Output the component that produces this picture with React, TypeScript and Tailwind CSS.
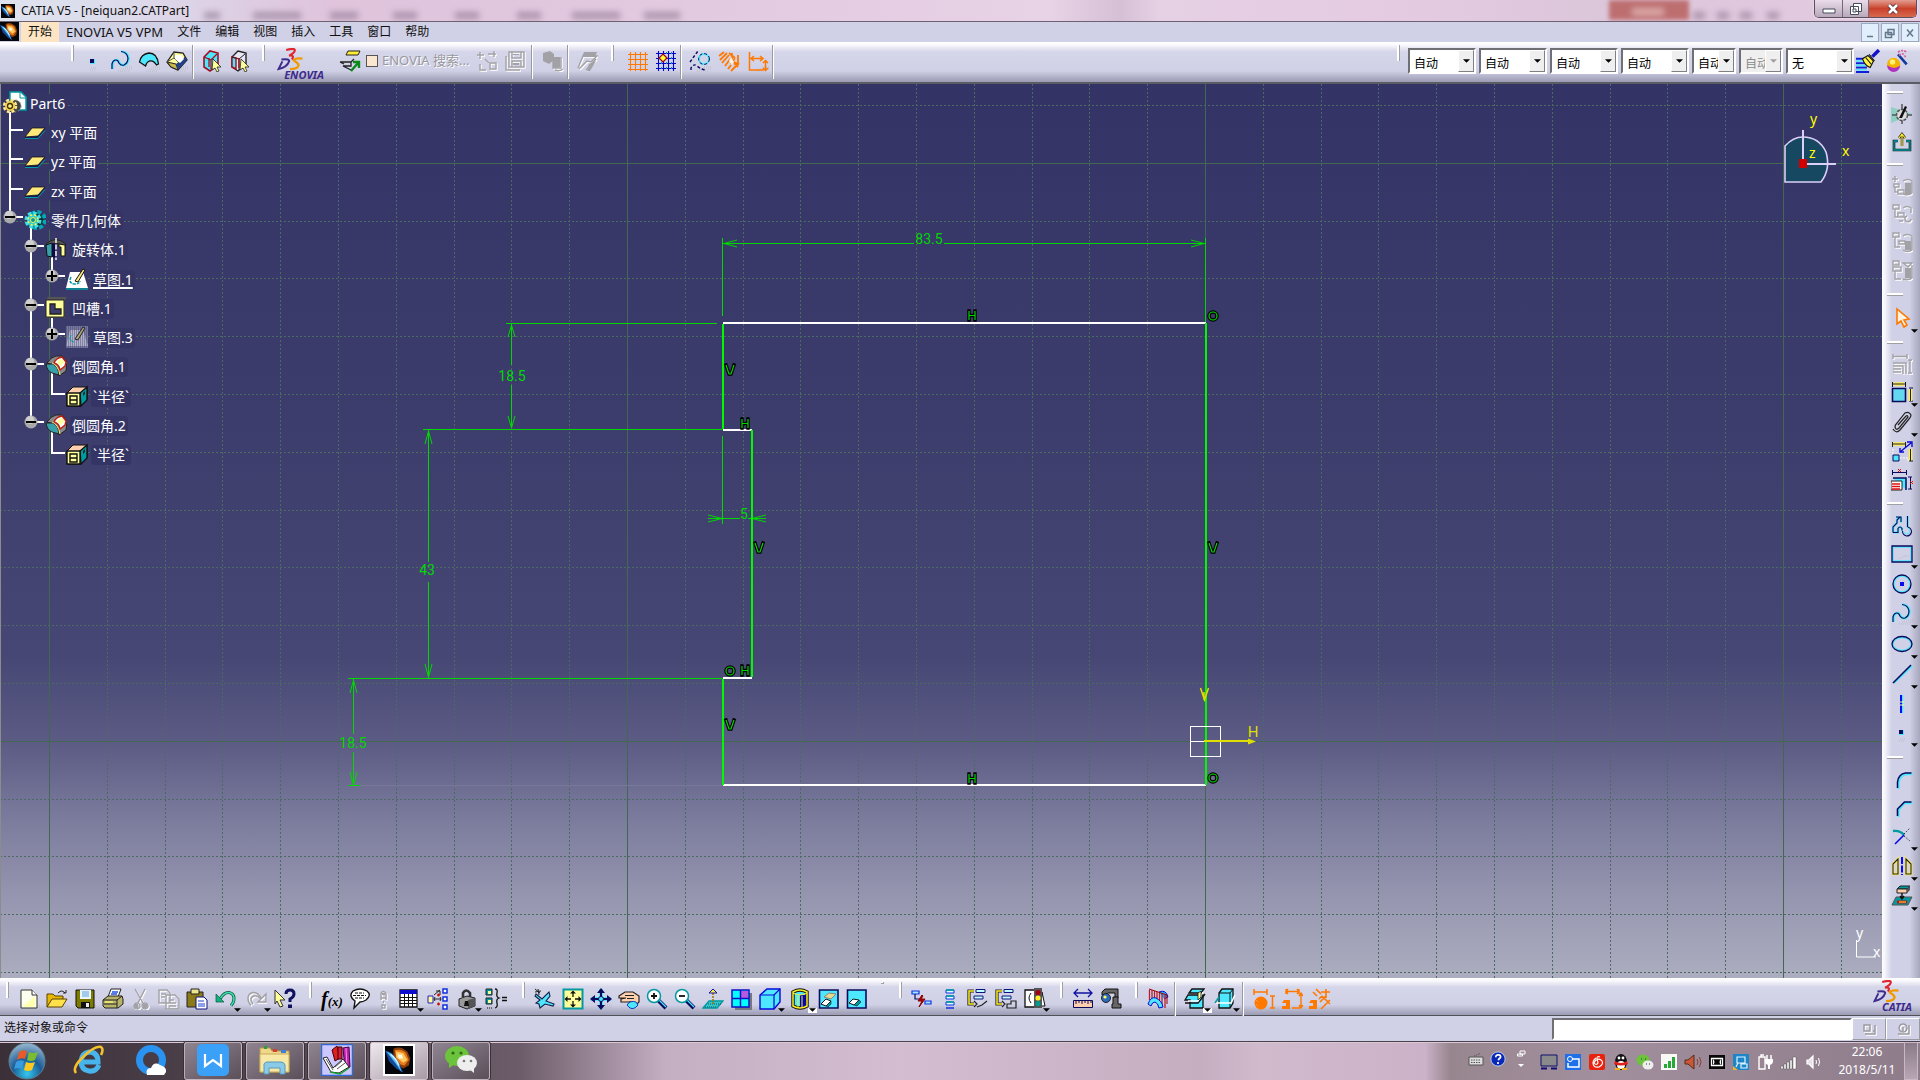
import React from "react";

type Kids = { children?: React.ReactNode };

/* ---------- icon helpers ---------- */
const Ic = ({ children, className = "size-[22px]" }: Kids & { className?: string }) => (
  <svg viewBox="0 0 22 22" className={className} fill="none" aria-hidden="true">
    {children}
  </svg>
);
const N = "#0a0a5c";
const C = "#4de8ff";
const T = "#009aa0";
const Y = "#ffff99";
const O = "#ff7800";
const G = "#a2a2a6";

const Shade = () => <path d="M8 21h12M11 19h11M15 17h7" stroke="#b9b9c6" strokeDasharray="1 1" />;

/* Grey glyph with a white relief edge */
const Dim = ({ d, fill }: { d: string; fill?: string }) => (
  <Ic>
    <path d={d} stroke="#fff" strokeWidth="1.4" transform="translate(1 1)" />
    <path d={d} stroke={G} strokeWidth="1.4" />
    {fill && <path d={fill} fill={G} />}
  </Ic>
);

const icons: Record<string, React.ReactNode> = {
  point: <Ic><path d="M8 9h5v5H8z" fill={C} /><path d="M8 9h4v4H8z" fill={N} /><path d="M9 18h6M8 20h5" stroke="#b9b9c6" strokeDasharray="1 1" /></Ic>,
  curve: <Ic><Shade /><path d="M2.500 19v-5q1-4 4-4q2 0 3 3q2 3 5 2q4-2 4-7q-1-6-7-6.500" stroke={C} strokeWidth="2.600" /><path d="M2 19v-5q1-4 4-4q2 0 3 3q2 3 5 2q4-2 4-7q-1-6-7-6.500" stroke={N} strokeWidth="1.200" /></Ic>,
  surface: <Ic><Shade /><path d="M1.500 12Q3 4 11 3q8 0 9.500 11l-2 1q-3-5-7-4q-3 1-4 5z" fill={C} stroke="#111" strokeWidth="1.300" /></Ic>,
  volume: <Ic><Shade /><path d="M1 12L8 2l9 1 4 7-9 10-7-3z" fill={Y} stroke="#222" strokeWidth="1.300" /><path d="M1 12l9 2 2 6-7-3z" fill="#c8b84a" stroke="#222" /><path d="M10 14l2 6 9-10-2-3z" fill="#23408a" /><path d="M8 2v6l5 5 6-6M8 8l-7 4" stroke="#555" /><path d="M9 5l6 0 3 4-4 4-5-4z" fill="#fff" /></Ic>,
  selSolid: <Ic><path d="M3 7l6-6 8 2v12l-8 6-6-4z" fill={C} stroke="#a01020" strokeWidth="1.600" /><path d="M3 7l7 3v9M10 10l6-6M8 8v9" stroke="#a01020" strokeWidth="1.300" /><path d="M12 9l8 8-4 0 2 4-2 1-2-4-3 2z" fill={Y} stroke="#222" strokeWidth=".8" /></Ic>,
  selEdge: <Ic><path d="M3 7l6-6 8 2v12l-8 6-6-4z" fill="#e8e8f4" stroke="#222" strokeWidth="1.400" /><path d="M3 7l4 1v11l-4-2z" fill={C} stroke="#a01020" strokeWidth="1.400" /><path d="M3 7l7 2v11M10 9l6-5" stroke="#222" /><path d="M7 8l3 1v9" stroke="#a01020" strokeWidth="1.300" /><path d="M12 9l8 8-4 0 2 4-2 1-2-4-3 2z" fill={Y} stroke="#222" strokeWidth=".8" /></Ic>,
  enoviaSearch: <Ic><path d="M9 1h12l-2 4H7z" fill="#ffee33" stroke="#222" /><path d="M1 12h11l3-3M1 12l4 2M12 12v4H4l8 4" stroke="#222" strokeWidth="1.300" /><path d="M12 21l7-8M14 12h6v6" stroke="#0a8a1a" strokeWidth="2.400" /></Ic>,
  dimSync: <Dim d="M4 2v7M1 5h7M12 4h8M18 1v6M4 14v6h6M14 13h6v6h-6zM9 9l4 4" />,
  dimSave: <Dim d="M5 2h15v15H5zM2 6v14h14M8 2v6h9V2M8 17v-6h9v6" fill="M9 13h6v2H9zM9 4h6v1H9z" />,
  dimDb: <Dim d="M11 8h8v10h-8zM13 20q4 2 8-1" fill="M1 3l7-2 4 3v6l-5 4-6-3zM11 7h7v10q-4 2-7 0z" />,
  dimSend: <Dim d="M2 18l5-12h14l-6 6-4-1-8 8M10 20l10-11" fill="M8 2h13l-2 5H6zM13 14l7-3-6 10h-3z" />,
  grid: <Ic><path d="M1 4.500h20M1 9.500h20M1 14.500h20M1 19.500h20M3.500 2v19M8.500 2v19M13.500 2v19M18.500 2v19" stroke={O} strokeWidth="1.100" /></Ic>,
  snapGrid: <Ic><path d="M1 3.500h20M1 8.500h20M1 13.500h20M1 18.500h20M3.500 1v20M8.500 1v20M13.500 1v20M18.500 1v20" stroke="#0000d0" strokeWidth="1.100" /><path d="M6 13h1M6 18h1M11 3h1M11 13h1M11 18h1M16 3h1M16 8h1M16 13h1M16 18h1" stroke={T} strokeWidth="2" /><path d="M8 4l4 4-4 4-4-4z" fill="#ffff33" stroke="#a00010" strokeWidth="1.200" /></Ic>,
  construct: <Ic><Shade /><circle cx="15" cy="9" r="5" stroke={C} strokeWidth="2" /><circle cx="15" cy="9" r="5.400" stroke={N} strokeDasharray="3 2" /><path d="M1 12L9 1M2 20v-2q3-5 6-2q5 4 9 4" stroke={N} strokeDasharray="3 2" strokeWidth="1.400" /></Ic>,
  geoCon: <Ic><path d="M1 6l5-4M2 10l7-7M4 13l7-8M7 16l6-8M10 19l3-4M13 21l8-8M14 3v8l6 3v-9M11 3l6 5M17 8l-4 6M16 13l4 4" stroke={O} strokeWidth="1.800" /><path d="M13 7l3 5-2 3-3-4z" fill="#fff3e6" /></Ic>,
  dimCon: <Ic><Shade /><path d="M2.500 2v18h14M4 8.500h11M7 6l-3 2.500L7 11M13 6l3 2.500-3 2.500M18.500 11v9M16 13l2.500-2.500L21 13M16 18l2.500 2.500L21 18" stroke={O} strokeWidth="1.500" /></Ic>,
  brush: <Ic className="size-6"><path d="M0 9h8M0 13h9M0 17h10M0 21h12" stroke="#1020d8" strokeWidth="1.800" /><path d="M0 11h8M0 15h9M0 19h10" stroke={C} strokeWidth="1.500" /><path d="M6 9l5-3 5 5-3 6q-5-2-7-8z" fill="#ffee44" stroke="#111" /><path d="M9 8l5 6M12 5l5 6" stroke="#111" /><path d="M15 7l6-6" stroke="#1010c8" strokeWidth="3.200" /></Ic>,
  magic: <Ic className="size-6"><circle cx="7" cy="14" r="6" fill="#f6b400" /><path d="M1 15a6 6 0 0 0 12 0q-5 5-12 0z" fill="#b030c0" /><circle cx="6" cy="12" r="2.500" fill="#fff07a" /><path d="M11 5l8 9" stroke="#123a9c" strokeWidth="2.400" /><path d="M11 3q4-3 8 0M12 6q4-4 6 2" stroke="#d860a0" strokeWidth="1.500" strokeDasharray="2 1" /></Ic>,

  newDoc: <Ic><Shade /><path d="M3 2h11l5 5v13H3z" fill="#fffff0" stroke="#333" /><path d="M5 18L17 8v11H6z" fill="#ffffb0" /><path d="M14 2v5h5" stroke="#333" fill="#fff" /></Ic>,
  open: <Ic><Shade /><path d="M1 19V6h6l2 2h8v3" fill="#e8b800" stroke="#5a4200" /><path d="M1 19l5-8h15l-5 8z" fill="#ffe24a" stroke="#5a4200" /><path d="M12 5q4-4 7 0M17 5h3V2" stroke="#222" /></Ic>,
  save: <Ic><Shade /><path d="M2 2h18v18H4l-2-2z" fill="#7d7a00" stroke="#111" /><path d="M6 2h11v9H6z" fill="#e8f4ff" /><path d="M8 4h7M8 6h7M8 8h7" stroke="#5aa0d8" /><path d="M7 14h9v6H7z" fill="#111" /><path d="M12 15h3v4h-3z" fill="#eee" /></Ic>,
  print: <Ic><path d="M6 9l3-8h10l-3 8z" fill="#fff" stroke="#222" /><path d="M10 4h6M9 6h6" stroke="#2050e0" strokeWidth="1.300" /><path d="M1 12l5-4h14l1 3v5l-5 4H3l-2-2z" fill="#b8b26a" stroke="#222" /><path d="M1 12h14l5-4M15 12v8M2 16h13" stroke="#222" /><path d="M3 14h8" stroke="#f5f07a" strokeWidth="1.500" /></Ic>,
  cut: <Dim d="M5 1l8 14M15 1L8 15M7 15a3 3 0 1 0 .1 0M15 15a3 3 0 1 0 .1 0" fill="M4 16h4v4H4zM13 16h4v4h-4z" />,
  copy: <Dim d="M1 2h8l3 3v10H1zM8 7h9l4 4v10H8zM3 6h5M3 9h4M11 12h5M11 15h7M11 18h7" />,
  paste: <Ic><path d="M1 4h16v15H1z" fill="#8a7a18" stroke="#222" /><path d="M5 1h8v5H5z" fill="#eee68a" stroke="#222" /><path d="M10 9h8l3 3v9H10z" fill="#fff" stroke="#101080" /><path d="M12 13h6M12 16h7M12 18h7" stroke="#2040d0" /></Ic>,
  undo: <Ic><Shade /><path d="M5 11Q9 4 14 4.500q5 1 5 6q0 4-3 7" stroke="#075a3a" strokeWidth="3" /><path d="M5 11Q9 4 14 4.500q5 1 5 6q0 4-3 7" stroke="#3fe0b0" strokeWidth="1.500" /><path d="M1 6v8h8z" fill="#18b080" stroke="#075a3a" strokeWidth=".7" /></Ic>,
  redo: <Dim d="M17 11Q13 4 8 4.500q-5 1-5 6q0 4 3 7M21 6v8h-8zM16 11Q12 7 9 8q-3 1-3 4l2 4" />,
  whats: <Ic><path d="M1 2l10 10-5 0 3 6-3 1-3-6-2 3z" fill={Y} stroke="#333" /><path d="M12 6q0-4 4-4q4 0 4 4q0 3-4 5v3" stroke="#101060" strokeWidth="3" /><path d="M14 16.500h4v3.500h-4z" fill="#101060" /></Ic>,
  bubble: <Ic><path d="M4 3q7-4 14 0q5 4-1 9q-3 2-6 2l-6 6 1-7q-7-5-2-10z" fill="#fff" stroke="#111" strokeWidth="1.400" /><path d="M6 5h9M4 7.500h13M6 10h9" stroke="#111" strokeDasharray="3 1" /></Ic>,
  dimKnow: <Dim d="M8 5v7M13 5v7M8 5q2-3 5 0M8 10h5M9 17h3v3H9zM10.500 13v2" fill="M9 5h3v2H9z" />,
  table: <Ic><Shade /><path d="M2 2h17v17H2z" fill="#fff" stroke="#111" strokeWidth="1.300" /><path d="M2 2h17v4H2z" fill="#0b0bd0" /><path d="M2 9.500h17M2 12.500h17M2 15.500h17M6.500 6v13M10.500 6v13M14.500 6v13" stroke="#111" /></Ic>,
  links: <Ic><path d="M1 8h5v7H1z" fill={Y} stroke="#2020c0" /><path d="M16 1h4v4h-4zM16 9h4v4h-4zM16 17h4v4h-4z" stroke="#1030e0" fill="#fff" strokeWidth="1.500" /><path d="M7 11h7M7 7l6-5M8 9l-1 2 1 2M13 9l1 2-1 2M9 3h4v4" stroke="#222" /><path d="M10 7h3M11.500 5.500v3M10 16h3M11.500 14.500v3" stroke="#d01010" strokeWidth="1.300" /></Ic>,
  lock: <Ic><path d="M7 9V5q3-5 7 0v5" stroke="#333" strokeWidth="2.600" /><path d="M3 11l8-3 8 2v8l-8 3-8-3z" fill="#9a9a9a" stroke="#222" /><path d="M12 12v9l7-3v-8z" fill="#555" /><path d="M9 13h3l1 5H8z" fill="#111" /></Ic>,
  formulas: <Ic><path d="M1 1h6v6H1zM1 10h6v6H1z" fill={T} stroke="#222" /><path d="M3 3h3v3H3zM3 12h3v3H3z" fill={Y} /><path d="M10 1q3 0 2 4t2 5q-3 1-2 5t-2 5M17 9.500h5M17 12.500h5" stroke="#111" strokeWidth="1.300" /><path d="M2 20h6" stroke="#111" strokeDasharray="1 1" /></Ic>,

  fly: <Ic><Shade /><path d="M2 6l6 5 7-7 1 4-4 5 8 3-1 2-8-2-5 4-1-4-3-1 4-3-5-4z" fill={C} stroke="#16204a" strokeWidth="1.100" /><path d="M1 1l5 4M1 4l6-1M4 1l1 6" stroke="#222" /></Ic>,
  fit: <Ic><path d="M1.500 1.500h19v19h-19z" fill={Y} stroke={T} strokeWidth="2" /><path d="M11 4v5M11 13v5M4 11h5M13 11h5" stroke="#111" strokeWidth="1.300" /><path d="M11 2.500l-3 3h6zM11 19.500l-3-3h6zM2.500 11l3-3v6zM19.500 11l-3-3v6z" fill="#111" /></Ic>,
  pan: <Ic><Shade /><path d="M11 1v20M1 11h20" stroke={C} strokeWidth="4" /><path d="M11 2v18M2 11h18" stroke={N} strokeWidth="2" /><path d="M11 0L7 5h8zM11 22l-4-5h8zM0 11l5-4v8zM22 11l-5-4v8z" fill={N} /><circle cx="11" cy="11" r="2.500" fill={C} stroke={N} /></Ic>,
  rotate: <Ic><path d="M1 8l6-4h8l6 4v6l-3 3q-2-4-8-3H3v-3l5-1H1z" fill="#ffcfae" stroke="#222" strokeWidth="1.200" /><path d="M7 7.500h9M9 10.500h7" stroke="#222" /><path d="M9 17q3-5 9-3l2 3q-4 5-8 3z" fill={C} stroke="#1040c0" /></Ic>,
  zoomIn: <Ic><path d="M12 12l8 8" stroke={N} strokeWidth="4" /><path d="M13 12l7 7" stroke={C} strokeWidth="1.300" /><circle cx="8" cy="8" r="6.500" fill="#fff" stroke={T} strokeWidth="1.500" /><path d="M8 5v6M5 8h6" stroke="#111" strokeWidth="1.800" /></Ic>,
  zoomOut: <Ic><path d="M12 12l8 8" stroke={N} strokeWidth="4" /><path d="M13 12l7 7" stroke={C} strokeWidth="1.300" /><circle cx="8" cy="8" r="6.500" fill="#fff" stroke={T} strokeWidth="1.500" /><path d="M5 8h6" stroke="#111" strokeWidth="1.800" /></Ic>,
  normal: <Ic><path d="M1 20l6-7h14l-6 7z" fill="#35c4c8" stroke={T} strokeWidth="1.300" /><path d="M3 19h12M6 16h13" stroke="#0a5a70" strokeDasharray="1 1" /><path d="M11 16V5" stroke="#a07a00" strokeWidth="1.500" strokeDasharray="2 1" /><path d="M11 1L7 5h8z" fill="#ffee33" stroke="#1010c0" /></Ic>,
  multi: <Ic><path d="M5 5h17v17H5z" fill="#77777f" /><path d="M2 2h17v17H2z" fill="#00ffff" stroke="#1010c8" strokeWidth="1.500" /><path d="M11 3h7v7h-7z" fill="#b85ae0" /><path d="M10.500 2v17M2 10.500h17" stroke="#1010c8" strokeWidth="1.500" /></Ic>,
  cube: <Ic><path d="M1 7l7-6h13v13l-6 7H1z" fill={C} stroke="#0808d8" strokeWidth="1.400" /><path d="M1 7h14v14M15 7l6-6" stroke="#0808d8" strokeWidth="1.200" /></Ic>,
  shaded: <Ic><path d="M4 4q7-4 14 0v14q-7 4-14 0z" fill={C} stroke="#111" strokeWidth="3.400" /><path d="M11 7h6v11l-6 2z" fill="#0808a8" /><path d="M4 4q7-4 14 0v14q-7 4-14 0z" stroke="#ffee22" strokeWidth="1.500" /><path d="M4 5q7 4 14 0M9 8v12M13 8v12" stroke="#ffee22" /></Ic>,
  hide: <Ic><path d="M1.500 2h18.500v18H1.500z" fill={C} stroke={N} strokeWidth="1.600" /><path d="M6 9l5-4 7 1-5 5z" fill="#e8d890" stroke="#887" /><path d="M3 16l5-5 5 2-5 5z" fill="#fff" stroke="#111" /><path d="M8 18l5-5v3l-3 3z" fill={T} stroke="#111" strokeWidth=".6" /></Ic>,
  swap: <Ic><path d="M1.500 2h18.500v18H1.500z" fill={C} stroke={N} strokeWidth="1.600" /><path d="M3 15l4-4 6 1-5 5z" fill="#fff" stroke="#111" /><path d="M8 17l5-5 2 2-4 4z" fill={T} stroke="#111" strokeWidth=".6" /></Ic>,
  tree1: <Ic><path d="M1 3h7v3H1zM14 13h6v3h-6z" stroke="#1030e0" strokeWidth="1.200" fill="#9fe8ff" /><path d="M4 6v5h4" stroke={N} strokeWidth="1.200" /><path d="M11 7l-4 6h4l-3 6 6-8h-4l2-3z" fill="#b00010" stroke="#800" /></Ic>,
  tree2: <Ic><path d="M7 2h8v3H7zM7 8h8v3H7zM7 14h8v3H7z" fill="#dff" stroke="#1030e0" /><path d="M7 2h8M7 8h8M7 14h8" stroke={T} strokeWidth="1.500" /><path d="M7 20h8" stroke="#1030e0" strokeWidth="1.500" /></Ic>,
  tree3: <Ic><path d="M7 3H2v13h5" stroke="#222" strokeWidth="3.200" /><path d="M7 3H2v13h5" stroke="#ffee22" strokeWidth="1.500" /><path d="M9 1.500h9v3H9zM7 8h9v3H7z" stroke="#101080" fill="#bff" /><path d="M7 19l3-3-3-3M10 19l5-2 5-4" stroke="#222" strokeWidth="1.200" /></Ic>,
  tree4: <Ic><path d="M7 3H2v13h5" stroke="#222" strokeWidth="3.200" /><path d="M7 3H2v13h5" stroke="#ffee22" strokeWidth="1.500" /><path d="M9 1.500h9v3H9zM7 8h9v3H7z" stroke="#101080" fill="#bff" /><path d="M7 19l3-3-3-3M12 20v-4h4v-3h5v7z" stroke="#222" strokeWidth="1.200" /></Ic>,
  traffic: <Ic><path d="M1 2h10v17H1z" fill="#fff" stroke="#111" strokeWidth="1.300" /><path d="M7 5q-4 5 0 10" stroke="#111" /><path d="M18 4l3 14h-4z" fill="#fff" stroke="#111" /><path d="M10 0h8v20h-8z" fill="#555" /><circle cx="14" cy="4.500" r="2.600" fill="#a00010" /><circle cx="14" cy="10" r="2.600" fill="#ffee22" /><circle cx="14" cy="15.500" r="2.600" fill="#009a90" /></Ic>,
  measure: <Ic><path d="M2 5h18M6 1L2 5l4 4M16 1l4 4-4 4" stroke="#1010a0" strokeWidth="1.300" /><path d="M1.500 12.500h19v7h-19z" fill="#ffcfae" stroke={N} /><path d="M4 13v3M7 13v2M10 13v3M13 13v2M16 13v3M19 13v2" stroke={N} /></Ic>,
  caliper: <Ic><path d="M5 1h13v9h-3V5H8L5 7H2V4z" fill="#666" stroke="#111" /><path d="M13 9h5v7h3v4h-9v-4h1z" fill="#666" stroke="#111" /><circle cx="6" cy="10" r="4.500" fill="#2d6ab8" stroke="#222" /><circle cx="5" cy="9" r="1.600" fill="#ff6" /></Ic>,
  analysis: <Ic><path d="M12 4q7-3 9 5l-4 2" fill="#2aa8ff" stroke="#1010c8" /><path d="M2 1l18 6v9" stroke="#900" /><path d="M2.500 2v10M5 2v9M7.500 3v7M10 4v7M12.500 5v8M15 6v12M18 7v13" stroke="#b02030" strokeWidth="1.300" /><path d="M1 16q3-8 8-6q6 3 7 9l-4 1q-1-5-4-6q-3 0-4 4z" fill={C} stroke="#0b0bd0" /></Ic>,
  cutPart: <Ic><path d="M5 5l3-4h12l-3 4zM4 7h15v13H6V12H1z" fill={C} stroke="#111" strokeWidth="1.300" /><path d="M1 15h13l7-9" stroke="#111" strokeWidth="1.500" /><path d="M4 13h10l5-9" stroke="#fff" strokeWidth="1.300" /><path d="M14 5l3-2v6l-3 3z" fill={Y} stroke="#111" strokeWidth=".8" /></Ic>,
  cutPlane: <Ic><path d="M5 5l3-4h11v14l-3 5H5z" fill={C} stroke="#111" strokeWidth="1.300" /><path d="M5 5h11v15M16 5l3-4" stroke="#111" /><path d="M1 15h16l4-8" stroke="#fff" strokeWidth="1.500" /><path d="M1 15l4-6" stroke={T} strokeWidth="1.500" /></Ic>,
  oDim1: <Ic><path d="M1 1v6M14 1v6M1 4h13M19.500 8v12M17 8h5M17 20h5" stroke={O} strokeWidth="1.500" /><circle cx="8" cy="15" r="6.500" fill={O} /><path d="M3 12l3 3M3 16l3 3" stroke="#ffb060" strokeDasharray="1 1" /></Ic>,
  oDim2: <Ic><path d="M5 1v5M18 1v5M5 3.500h13M7 1L5 3.500 7 6M16 1l2 2.500L16 6M20 6v14M18 8l2-3 2 3M18 17l2 3 2-3M11 20h8" stroke={O} strokeWidth="1.400" /><path d="M3 12h6v9H1v-3h4v-3H1z" fill={O} /></Ic>,
  oDim3: <Ic><path d="M4 4l4 4M7 1l5 5M17 1v9M12 4h9M13 8l8 8M14 19l7-7M11 14l6-6M12 21l4-4M10 11l3-3" stroke={O} strokeWidth="1.600" /><path d="M2 12h6v9H0v-3h4v-3H0z" fill={O} /></Ic>,

  compass: <Ic><path d="M0 4l22 7-22 9z" fill="#8fd0c4" /><path d="M11 1v20M1 12h20" stroke="#555" strokeWidth="1.500" /><circle cx="11" cy="12" r="5.500" fill="#ddd" stroke="#555" strokeWidth="1.500" strokeDasharray="3 1" /><path d="M8 15l6-12 2 1-5 11z" fill="#111" /></Ic>,
  exit: <Ic><path d="M7 10H3v9h16v-9h-4" stroke="#111" strokeWidth="2.600" /><path d="M7 10H3v9h16v-9h-4" stroke={T} strokeWidth="1.300" /><path d="M11 15V3M8 7l3-4 3 4" stroke="#222" strokeWidth="2.400" /><path d="M11 15V3M8 7l3-4 3 4" stroke="#ffee22" strokeWidth="1.200" /></Ic>,
  d1: <Dim d="M4 1v6M1 4h6M3 9h5v3H3zM7 15h6v4H7zM12 6q5-3 9 0v12q-4 3-8 1M4 12v5h3" fill="M14 8h6v11h-6z" />,
  d2: <Dim d="M2 2h6v4H2zM4 6v8h3M7 10h6v4H7zM12 5q4-3 8 0v5M16 13a3 3 0 1 0 4 3M8 18h4" />,
  d3: <Dim d="M2 2h6v4H2zM4 6v10h5M8 10h6v3H8zM12 5q4-3 9 0v14q-5 3-9 0" fill="M14 10h6v9h-6z" />,
  d4: <Dim d="M2 2h6v4H2zM2 8h8v4H2zM4 12v8h6M12 4h9l-4 4zM21 6v13q-4 3-9 1" fill="M14 9h6v10h-6z" />,
  arrow: <Ic><path d="M6 2v15l4-3 3 6 3-2-3-5 5-1z" fill="#fff3e2" stroke={O} strokeWidth="1.600" /></Ic>,
  dimCons: <Dim d="M2 1v5M16 1v5M2 3.500h14M19 7v13M17 7h4M17 20h4M2 10h13v11M2 13h10v8M2 16h8M2 19h8" />,
  cons: <Ic><path d="M1.500 1v5M14.500 1v5M18 7h4M18 20h4" stroke={N} /><path d="M2 3h12M19.500 8v12" stroke="#ffee55" strokeWidth="3.500" /><path d="M2 3h12M19.500 8v12" stroke="#222" /><path d="M1.500 7.500h13v13h-13z" fill="#63d8f0" stroke={N} strokeWidth="1.600" /></Ic>,
  clip: <Ic><path d="M7 14l8-9q2-1 2 1l-9 11q-3 3-4-1q0-2 2-4L14 2q4-2 6 2q0 2-2 4L9 19q-4 4-7-1" stroke="#222" strokeWidth="1.200" /></Ic>,
  autoCon: <Ic><path d="M2 3h12M19.500 8v12" stroke="#ffee55" strokeWidth="3.500" /><path d="M1.500 1v5M14.500 1v5M2 3h12M19.500 8v12M18 20h4" stroke="#222" /><path d="M2 14h6v6H2z" fill={C} stroke={N} /><path d="M9 11L20 2M16 1h5v5M9 7v4h4" stroke="#0b0bd0" strokeWidth="1.400" /><path d="M9 17h8v4M2 8v5" stroke="#fff" strokeDasharray="2 1" /></Ic>,
  editCon: <Ic><path d="M1.500 1v5M15.500 1v5M2 3.500h13M19.500 8v12M17 8h4M17 20h4" stroke={N} /><path d="M7 0l3 3M10 0L7 3M19 12l3 3M22 12l-3 3" stroke="#e01010" /><path d="M2 9h13v12" fill={C} stroke={N} strokeWidth="1.500" /><path d="M0 12h11v9H0z" fill="#fff" stroke="#222" /><path d="M1 15h8M1 17.500h8M1 20h8" stroke="#e01010" strokeWidth="1.300" /></Ic>,
  profile: <Ic><path d="M2 17.500V12l4-4V5l3-3M5 2.500h5v5M2 17.500h5v-4q2-3 4 0v2M16.500 1v11" stroke={C} strokeWidth="2.200" /><path d="M2 17.500V12l4-4V5l3-3M5 2h5v5M2 17.500h5v-4q2-3 4 0v2M16.500 1v11q4 1 4 5q-1 4-5 4q-4-1-4-5" stroke={N} strokeWidth="1.100" /><path d="M16 12.500q3 1 3 4.500q-1 2-3.500 2q-3 0-3-3" stroke={C} /></Ic>,
  rect: <Ic><path d="M2 4h18v14H2z" stroke={C} strokeWidth="1.500" /><path d="M1 3h20v16H1z" stroke={N} strokeWidth="1.300" /><path d="M8 16l5-3h7" stroke="#b9b9c6" strokeDasharray="1 1" /></Ic>,
  circle: <Ic><circle cx="11" cy="11" r="8" stroke={C} strokeWidth="1.500" /><circle cx="11" cy="11" r="9" stroke={N} strokeWidth="1.300" /><path d="M9 9h4v4H9z" fill="#0b0bf0" /></Ic>,
  ellipse: <Ic><ellipse cx="11" cy="11" rx="9" ry="6.500" stroke={C} strokeWidth="1.500" /><ellipse cx="11" cy="11" rx="10" ry="7.500" stroke={N} strokeWidth="1.300" /></Ic>,
  line: <Ic><path d="M3 20L21 3" stroke={C} strokeWidth="2" /><path d="M2 20L20 2" stroke={N} strokeWidth="1.600" /></Ic>,
  axis: <Ic><path d="M11.500 2v18" stroke={C} strokeWidth="1.500" /><path d="M10 2v18" stroke="#0b0bf0" strokeWidth="2" /><path d="M9 9h4M9 12h4" stroke={Y} /></Ic>,
  corner: <Ic><path d="M7.500 20v-6q1-8 8-9h6" stroke={C} strokeWidth="2.400" /><path d="M6.500 19v-6q1-8 8-9h6" stroke={N} strokeWidth="1.500" /></Ic>,
  chamfer: <Ic><path d="M7.500 20v-7l6-7h8" stroke={C} strokeWidth="2.400" /><path d="M6.500 19v-7l7-7h7" stroke={N} strokeWidth="1.600" /></Ic>,
  trim: <Ic><path d="M2 6q7-1 11 4" stroke={T} strokeWidth="2.400" /><path d="M4 19l9-9" stroke="#0b0be0" strokeWidth="1.600" /><path d="M13 9l6-6M13 11l6 5" stroke="#333" strokeDasharray="1.500 1.500" /></Ic>,
  mirror: <Ic><path d="M7 4L2 9v10h5zM15 4l5 5v10h-5z" stroke="#ffee55" strokeWidth="2.600" /><path d="M7 4L2 9v10h5zM15 4l5 5v10h-5z" stroke="#222" strokeWidth="1.100" /><path d="M11 2v18" stroke="#0b0bf0" strokeWidth="2" strokeDasharray="7 1.500" /></Ic>,
  project: <Ic><path d="M6 4l3-3h10l-3 3z" fill={T} stroke="#222" /><path d="M6 4h10v4H6z" fill="#ffcfae" stroke="#222" /><path d="M16 4l3-3v4l-3 3z" fill="#555" /><path d="M1 20l4-8h16l-4 8z" fill={T} stroke="#555" /><path d="M11 8v5M9 11l2 3 2-3" stroke="#111" strokeWidth="1.400" /><path d="M6 17h10" stroke="#c01010" strokeWidth="3" /><path d="M8 17h7" stroke="#fe4" /></Ic>,
};

/* ---------- toolbar parts ---------- */
const Caret = ({ boxed }: { boxed?: boolean }) => (
  <span className={boxed ? "absolute -right-0.5 bottom-0 bg-white px-px pb-px" : "absolute right-0 bottom-0 pb-px"}>
    <svg viewBox="0 0 8 4" className="block h-1 w-[7px]"><path d="M0 0h8L4 4z" fill="#000" /></svg>
  </span>
);

const Tool = ({ name, label, menu, boxed, children }: { name?: string; label: string; menu?: boolean; boxed?: boolean } & Kids) => (
  <button type="button" aria-label={label} className={menu ? "relative flex h-7 w-[30px] shrink-0 items-center justify-center" : "flex h-7 w-7 shrink-0 items-center justify-center"}>
    {name ? icons[name] : children}
    {menu && <Caret boxed={boxed} />}
  </button>
);

const SideTool = ({ name, label, menu }: { name: string; label: string; menu?: boolean }) => (
  <button type="button" aria-label={label} className={menu ? "relative flex h-[30px] w-full shrink-0 justify-center pt-[3px] pl-0.5" : "flex h-7 w-full shrink-0 justify-center pt-[3px] pl-0.5"}>
    {icons[name]}
    {menu && <span className="absolute right-0.5 bottom-px"><svg viewBox="0 0 8 4" className="block h-1 w-[7px]"><path d="M0 0h8L4 4z" fill="#000" /></svg></span>}
  </button>
);

const Grip = () => <span className="h-4 w-[3px] shrink-0 border-r border-r-[#a0a0a4] bg-white" />;
const Rule = () => <span className="h-full w-0.5 shrink-0 border-r border-l border-l-[#9a9a9e] border-r-white" />;
const SideGrip = ({ className }: { className: string }) => (
  <span className={`${className} flex w-full shrink-0 items-center pl-[5px]`}>
    <span className="h-[3px] w-4 border-b border-[#a0a0a4] bg-white" />
  </span>
);

const DSMark = ({ word, className }: { word: string; className: string }) => (
  <div className={className}>
    <svg viewBox="0 0 28 24" className="h-[23px] w-7" fill="none" aria-hidden="true">
      <path d="M9 2q9-2 9 0q0 3-6 6q6-1 3 4" stroke="#e0242c" strokeWidth="2.200" />
      <path d="M4 12q9-1 8 2q-2 6-11 8l4-8" stroke="#3d2a8c" strokeWidth="2" />
      <path d="M26 11q-8-1-9 2q4 2 5 5q-1 4-9 4" stroke="#f09a00" strokeWidth="2.400" />
    </svg>
    <span className="block text-right text-[11px] leading-[8px] font-bold text-[#3d2a8c] italic">{word}</span>
  </div>
);

const Combo = ({ value, label, width, off }: { value: string; label: string; width: string; off?: boolean }) => (
  <div className={`${width} relative h-[26px] shrink-0 overflow-hidden border-2 border-t-[#707074] border-r-white border-b-white border-l-[#707074] ${off ? "bg-[#efefef]" : "bg-white"}`}>
    <select aria-label={label} disabled={off} className={`h-full w-full appearance-none pb-1 pl-1 text-xs outline-none ${off ? "text-[#8a8a8a]" : "text-black"}`}>
      <option>{value}</option>
    </select>
    <span className="pointer-events-none absolute top-0 right-0 flex h-full w-4 items-center justify-center border border-t-white border-r-[#808084] border-b-[#808084] border-l-white bg-[#efefef]">
      <svg viewBox="0 0 8 4" className="h-1 w-[7px]"><path d="M0 0h8L4 4z" fill={off ? "#a0a0a0" : "#000"} /></svg>
    </span>
  </div>
);

const Comet = ({ className }: { className: string }) => (
  <svg viewBox="0 0 20 20" className={className} aria-hidden="true">
    <path d="M0 0h20v20H0z" fill="#05060c" />
    <path d="M6 2q4-2 7 0l3 2 2 5-1 5-4 2q-5-2-7-8z" fill="#8a3c08" />
    <path d="M7 3q5-1 8 2l2 5-3 4q-4 0-6-5z" fill="#e87c1c" />
    <path d="M8 4l5 1 3 5-3 2-5-4z" fill="#ffc860" />
    <path d="M9 6l3 0 1 3-3 0z" fill="#fff8e0" />
    <path d="M0 3l5 2 5 7 3 7-5-3-5-5z" fill="#114a9a" />
    <path d="M1 4q6 2 9 9l2 6-4-6q-4-5-7-9z" fill="#5cc0f4" />
    <path d="M4 6q4 3 6 8" stroke="#d4f0ff" strokeWidth="1" fill="none" />
  </svg>
);

/* ---------- title and menu ---------- */
const smudges = [
  "left-[204px] w-4", "left-[253px] w-12", "left-[330px] w-7", "left-[393px] w-6", "left-[455px] w-6", "left-[517px] w-6",
  "left-[572px] w-12", "left-[644px] w-9", "left-[1693px] w-3", "left-[1717px] w-3", "left-[1740px] w-3", "left-[1767px] w-3",
];

const TitleBar = () => (
  <header className="relative flex h-[22px] shrink-0 items-center overflow-hidden border-b border-[#6e6272] bg-[linear-gradient(90deg,#dfe3ef_0,#dcdcec_110px,#dfc4dc_330px,#e2cae0_700px,#e8d2e6_1050px,#d6c0d6_1120px,#e6d0e4_1160px,#e4cbe2_1400px,#dcc6da_1600px,#e4cbe2_100%)]">
    {smudges.map((s) => (
      <span key={s} className={`${s} absolute top-3 h-[7px] bg-[#76607a]/50 blur-[3px]`} />
    ))}
    <span className="absolute top-0 left-[1609px] h-5 w-20 bg-[#bd6f70] blur-[2px]" />
    <span className="absolute top-2 left-[1632px] h-2 w-8 bg-[#dba9a9] blur-[3px]" />
    <Comet className="relative ml-px size-[14px] shrink-0" />
    <h1 className="relative ml-[6px] text-xs text-[#111]">CATIA V5 - [neiquan2.CATPart]</h1>
    <div className="relative mr-[3px] ml-auto flex h-[18px] self-start overflow-hidden rounded-b-[5px] border border-t-0 border-[#5b4f5e] shadow-[0_0_2px_#fff]">
      <button type="button" aria-label="最小化" className="flex w-7 items-center justify-center border-r border-[#75687a] bg-linear-to-b from-[#eadcea] to-[#b9a9bb]">
        <svg viewBox="0 0 14 14" className="size-3.5"><path d="M1 7h12v4H1z" fill="#fff" stroke="#444b5c" /></svg>
      </button>
      <button type="button" aria-label="还原" className="flex w-[26px] items-center justify-center border-r border-[#75687a] bg-linear-to-b from-[#eadcea] to-[#b9a9bb]">
        <svg viewBox="0 0 14 14" className="size-3.5" fill="#fff" stroke="#444b5c"><path d="M4.500 1.500h8v8h-8zM1.500 4.500h8v8h-8z" /><path d="M4 7h3v3H4z" /></svg>
      </button>
      <button type="button" aria-label="关闭" className="flex w-[47px] items-center justify-center bg-linear-to-b from-[#e29c90] via-[#c9402b] to-[#d8694c]">
        <svg viewBox="0 0 14 14" className="size-3.5"><path d="M3 3l8 8M11 3l-8 8" stroke="#5a3038" strokeWidth="4.500" /><path d="M3 3l8 8M11 3l-8 8" stroke="#fff" strokeWidth="2.600" /></svg>
      </button>
    </div>
  </header>
);

const MenuBar = () => (
  <nav className="flex h-5 shrink-0 items-stretch bg-[#d0d0e6] text-xs text-[#111]">
    <Comet className="size-[19px] shrink-0" />
    <button type="button" className="ml-0.5 bg-[#fde4c3] px-[7px]">开始</button>
    <button type="button" className="px-[7px] text-[13px] leading-5">ENOVIA V5 VPM</button>
    {["文件", "编辑", "视图", "插入", "工具", "窗口", "帮助"].map((m) => (
      <button key={m} type="button" className="px-[7px]">{m}</button>
    ))}
    <div className="mr-px ml-auto flex gap-0.5 pt-px">
      {[
        ["最小化文档", "M4 10.500h6"],
        ["还原文档", "M5 3.500h6v5H5zM2.500 6.500h6v5h-6z"],
        ["关闭文档", "M4 3.500l6 7M10 3.500l-6 7"],
      ].map(([l, d]) => (
        <button key={l} type="button" aria-label={l} className="flex w-[18px] items-center justify-center border border-[#9aabc0] bg-[#e1eefb]">
          <svg viewBox="0 0 14 14" className="size-3.5" fill="none"><path d={d} stroke="#66788c" strokeWidth="1.500" /></svg>
        </button>
      ))}
    </div>
  </nav>
);

const bar = "bg-[linear-gradient(180deg,#fff_0,#fbfbfe_6%,#d6d6ea_24%,#d0d0e6_72%,#a5a5bd_94%,#9c9cb4_100%)]";

const TopToolbar = () => (
  <div className={`${bar} flex h-[42px] shrink-0 items-start border-b-2 border-[#5c5c64] pt-[3px]`}>
    <div className="flex h-[34px] shrink-0 items-start pl-[71px]">
      <Grip />
      <div className="ml-[5px] flex pt-0.5">
        <Tool name="point" label="点" /><Tool name="curve" label="曲线" /><Tool name="surface" label="曲面" /><Tool name="volume" label="体积" />
      </div>
      <span className="w-px" /><Rule />
      <div className="ml-1 flex pt-0.5"><Tool name="selSolid" label="选择几何体" /><Tool name="selEdge" label="选择边" /></div>
      <span className="w-2" />
      <Grip />
      <DSMark word="ENOVIA" className="ml-3 w-[47px] pt-[3px]" />
      <div className="ml-3 flex items-center gap-0.5 pt-0.5">
        <Tool name="enoviaSearch" label="ENOVIA 连接" />
        <label className="flex items-center gap-1 text-[13px] whitespace-nowrap text-[#98989e] [text-shadow:1px_1px_#fff]">
          <input type="checkbox" className="size-3 appearance-none border border-[#555] bg-[#fbe6cf]" />
          ENOVIA 搜索...
        </label>
      </div>
      <div className="ml-1 flex pt-0.5"><Tool name="dimSync" label="同步" /><Tool name="dimSave" label="保存到 ENOVIA" /></div>
      <span className="w-0.5" /><Rule />
      <div className="ml-1.5 pt-0.5"><Tool name="dimDb" label="数据库" /></div>
      <Rule />
      <div className="ml-1 pt-0.5"><Tool name="dimSend" label="发送" /></div>
      <span className="w-2.5" />
      <Grip />
      <div className="ml-2.5 flex pt-0.5"><Tool name="grid" label="网格" /><Tool name="snapGrid" label="点对齐" /></div>
      <Rule />
      <div className="ml-1 flex gap-px pt-0.5"><Tool name="construct" label="构造元素" /><Tool name="geoCon" label="几何约束" /><Tool name="dimCon" label="尺寸约束" /></div>
      <Rule />
    </div>
    <div className="ml-auto flex items-start pr-2">
      <Grip />
      <div className="ml-2 flex gap-[3px] pt-[3px]">
        <Combo value="自动" label="填充颜色" width="w-17" />
        <Combo value="自动" label="透明度" width="w-17" />
        <Combo value="自动" label="线宽" width="w-17" />
        <Combo value="自动" label="线型" width="w-17" />
        <Combo value="自动" label="点符号" width="w-11" />
        <Combo value="自动" label="渲染样式" width="w-11" off />
        <Combo value="无" label="图层" width="w-17" />
      </div>
      <div className="flex gap-0.5 pt-0.5"><Tool name="brush" label="格式刷" /><Tool name="magic" label="图形属性向导" /></div>
    </div>
  </div>
);

/* ---------- specification tree ---------- */
const treeIcons: Record<string, React.ReactNode> = {
  part: (
    <svg viewBox="0 0 25 24" className="h-6 w-[25px]" aria-hidden="true">
      <path d="M8 1h11l5 5v13H8z" fill="#fff" stroke={T} strokeWidth="1.500" />
      <path d="M18 1v6h6" fill="none" stroke={T} />
      <circle cx="13" cy="15" r="6" fill="#444" stroke="#888" strokeDasharray="2 2" />
      <circle cx="8" cy="15" r="5" fill="#f2d24a" />
      <circle cx="8" cy="15" r="6" fill="none" stroke="#ffe88a" strokeWidth="2.500" strokeDasharray="3 1.700" />
      <circle cx="8" cy="15" r="2.500" fill="#ffee88" stroke="#40300a" strokeWidth="1.300" />
    </svg>
  ),
  plane: <Ic><path d="M1 17L8 8h13l-7 9z" fill="#111a60" /><path d="M1 16L8 7h13l-7 8z" fill="#ffe97a" stroke="#111" strokeWidth=".8" /><path d="M1 17.500h13l7-8" stroke={T} /></Ic>,
  body: <Ic><circle cx="13" cy="11" r="7" fill="#033" /><circle cx="13" cy="11" r="8" stroke="#04a8b0" strokeWidth="4" strokeDasharray="4 2.300" /><circle cx="9" cy="11" r="6" fill="#2fd0d8" /><circle cx="9" cy="11" r="7" stroke="#40e0e8" strokeWidth="3" strokeDasharray="3.500 2" /><circle cx="9" cy="11" r="5" stroke="#ffee44" strokeWidth="1.500" strokeDasharray="2 2" /><circle cx="9" cy="11" r="2.500" fill={T} stroke="#ffee44" /></Ic>,
  shaft: <Ic><path d="M1 6q9-9 20 0l-1 2-9-3-9 3z" fill="#555" stroke="#222" /><path d="M1 7l6-2v14l-5-1z" fill="#38a0a8" stroke="#111" /><path d="M7 5l3 1v14l-3-1z" fill="#0c0c40" /><path d="M14 6l6 1v11h-4V9h-2z" fill={Y} stroke="#111" /><path d="M11 0v22" stroke="#fff" strokeDasharray="5 1.500" strokeWidth="1.400" /></Ic>,
  sketch: <Ic><path d="M4 4h13l5 16H0z" fill="#fff" /><path d="M0 21h22" stroke={T} strokeWidth="1.500" /><path d="M5 9q-3 6 3 7q6 0 6-3" stroke={T} strokeWidth="1.500" strokeDasharray="3 1" /><path d="M9 13L17 1l2 1-7 12z" fill="#ffe97a" stroke="#111" /></Ic>,
  sketchOff: <Ic><path d="M0 0h22v22H0z" fill="#b5b5d0" opacity=".5" /><path d="M4 4h13l5 16H0z" fill="#e8e8f4" opacity=".5" /><path d="M0 1h22M0 3h22M0 5h22M0 7h22M0 9h22M0 11h22M0 13h22M0 15h22M0 17h22M0 19h22M0 21h22" stroke="#404070" strokeDasharray="1 1" opacity=".8" /><path d="M9 13L17 1l2 1-7 12z" fill="#aaa070" stroke="#223" /><path d="M5 9q-3 6 3 7" stroke={T} /></Ic>,
  pocket: <Ic><path d="M1 3l2-3h19l-2 3v18H1z" fill="#555" /><path d="M1 3h18v17H1z" fill={Y} stroke="#222" /><path d="M5 7h5v5h6v5H5z" fill="#3d3d70" stroke="#222" strokeWidth="1.300" /></Ic>,
  fillet: <Ic><path d="M2 8q4-6 9-7l6 0 5 6-1 9-7 5q0-8-5-11z" fill="#8a8a8a" stroke="#222" /><path d="M1 9h7q5 2 6 11l-7-2q-5-2-6-9z" fill="#38a0a8" stroke="#222" /><path d="M9 8q2-5 8-6l4 5-1 4-5 4q-1-6-6-7z" fill="#fff" stroke="#c02010" strokeWidth="1.400" /><path d="M12 8q1-3 5-4l2 3-3 4q-1-2-4-3z" fill={Y} /><path d="M7 8q6 2 8 12" stroke="#ffe97a" /></Ic>,
  param: <Ic><path d="M1 8l6-6h14v13l-6 6H1z" fill="#ffcfae" stroke="#111" /><path d="M14 8l7-6v13l-6 6z" fill={T} stroke="#111" strokeWidth="1.300" /><path d="M1 8h13v13H1z" fill={Y} stroke="#111" strokeWidth="1.400" /><path d="M4 11h7v8H4zM4 15h7" stroke="#111" strokeWidth="1.400" /><path d="M17 8l2-2v3l-2 2z" fill="#222" /></Ic>,
};

const treeRows: { icon: string; text: string; pad: string; active?: boolean }[] = [
  { icon: "part", text: "Part6", pad: "pl-0.5" },
  { icon: "plane", text: "xy 平面", pad: "pl-6" },
  { icon: "plane", text: "yz 平面", pad: "pl-6" },
  { icon: "plane", text: "zx 平面", pad: "pl-6" },
  { icon: "body", text: "零件几何体", pad: "pl-6" },
  { icon: "shaft", text: "旋转体.1", pad: "pl-[45px]" },
  { icon: "sketch", text: "草图.1", pad: "pl-[66px]", active: true },
  { icon: "pocket", text: "凹槽.1", pad: "pl-[45px]" },
  { icon: "sketchOff", text: "草图.3", pad: "pl-[66px]" },
  { icon: "fillet", text: "倒圆角.1", pad: "pl-[45px]" },
  { icon: "param", text: "`半径`", pad: "pl-[66px]" },
  { icon: "fillet", text: "倒圆角.2", pad: "pl-[45px]" },
  { icon: "param", text: "`半径`", pad: "pl-[66px]" },
];

const Ball = ({ x, y, plus }: { x: number; y: number; plus?: boolean }) => (
  <g>
    <circle cx={x} cy={y} r="6.500" fill="#a9a9a9" />
    <circle cx={x - 1} cy={y - 2} r="4" fill="#cfcfcf" />
    <path d={`M${x - 5} ${y}h10${plus ? `M${x} ${y - 5}v10` : ""}`} stroke="#000" strokeWidth="2" />
  </g>
);

const Tree = () => (
  <div className="absolute top-1 left-0 w-40">
    <svg className="absolute top-0 left-0 h-[390px] w-24" fill="none" aria-hidden="true">
      <path d="M10 24v100M10 42h13M10 71h13M10 101h13M10 129h13M31 138v196M31 158h13M31 217h13M31 276h13M31 334h13M52 166v22h13M52 226v20h13M52 284v22h13M52 343v22h13" stroke="#fff" strokeWidth="2" />
      <Ball x={10} y={129} /><Ball x={31} y={158} /><Ball x={52} y={188} plus /><Ball x={31} y={217} />
      <Ball x={52} y={246} plus /><Ball x={31} y={276} /><Ball x={31} y={334} />
    </svg>
    <ul className="relative flex h-[381px] flex-col text-sm text-white">
      {treeRows.map((r, i) => (
        <li key={i} className={`${r.pad} flex flex-1 items-center`}>
          <span className="shrink-0">{treeIcons[r.icon]}</span>
          <span className={`${i === 0 ? "ml-px" : "ml-[3px]"} mt-0.5 rounded bg-[#343465] px-0.5 leading-5 whitespace-nowrap`}>
            <span className={r.active ? "underline decoration-2 underline-offset-2" : ""}>{r.text}</span>
          </span>
        </li>
      ))}
    </ul>
  </div>
);

/* ---------- sketch canvas ---------- */
const CELL = 57.8;
const gridSteps = Array.from({ length: 80 }, (_, k) => k);

const Grid = () => (
  <g strokeWidth="1" shapeRendering="crispEdges">
    {gridSteps.map((k) => {
      const x = Math.round(49 + k * CELL) + 0.5;
      const y = Math.round(21 + k * CELL) + 0.5;
      return (
        <g key={k}>
          <line x1={x} x2={x} y1="0" y2="100%" stroke={k % 10 === 0 ? "#426852" : "#4b6a62"} strokeDasharray={k % 10 === 0 ? undefined : "2 2"} />
          <line y1={y} y2={y} x1="0" x2="100%" stroke={k % 10 === 1 ? "#426852" : "#4b6a62"} strokeDasharray={k % 10 === 1 ? undefined : "2 2"} />
        </g>
      );
    })}
  </g>
);

const marks: [string, number, number][] = [
  ["H", 972, 236], ["O", 1213, 236], ["V", 730, 290], ["H", 745, 344], ["V", 759, 468], ["V", 1213, 468],
  ["O", 730, 591], ["H", 745, 591], ["V", 730, 645], ["H", 972, 699], ["O", 1213, 698],
];
const dims: [string, number, number][] = [
  ["83.5", 929, 160], ["18.5", 512, 297], ["43", 427, 491], ["18.5", 353, 664], ["5", 744, 435],
];
const markPath: Record<string, string> = {
  H: "M-3 -9v9M3 -9v9M-3 -4.500h6",
  V: "M-4 -9l3 9h2l3-9",
};

const Sketch = () => (
  <svg className="absolute inset-0 h-full w-full" fill="none" role="img" aria-label="草图">
    <Grid />
    <path d="M353 701.500h369" stroke="#77779a" />
    <g stroke="#00d800" shapeRendering="crispEdges">
      <path d="M722.500 154v78M1205.500 154v85M723 159.500h191M944 159.500h261" />
      <path d="M506 239.500h211M511.500 240v41M511.500 301v43M423 345.500h299" />
      <path d="M428.500 346v132M428.500 498v96M348 594.500h374" />
      <path d="M353.500 595v55M353.500 668v33M348 701.500h12" />
      <path d="M722.500 352v88M708 434.500h32M748 434.500h18" />
    </g>
    <g stroke="#00d800">
      <path d="M737 156l-13 3.500 13 3.500M1191 156l13 3.500-13 3.500M728 159.500h7M1193 159.500h7" />
      <path d="M508 253l3.500-12 3.500 12M508 332l3.500 12 3.500-12M425 360l3.500-13 3.500 13M425 580l3.500 13 3.500-13M350 609l3.500-13 3.500 13M350 688l3.500 13 3.500-13" />
      <path d="M708 431l14 3.500-14 3.500M766 431l-14 3.500 14 3.500" />
    </g>
    <g strokeWidth="2" shapeRendering="crispEdges">
      <path d="M723 239h483M723 346h29M723 594h29M723 701h483" stroke="#fff" />
      <path d="M723 240v105M752 346v247M723 595v106M1206 239v462" stroke="#00f800" />
    </g>
    <g shapeRendering="crispEdges">
      <path d="M1190.500 642.500h30v30h-30zM1191 657.500h14" stroke="#fff" />
      <path d="M1206 657h45" stroke="#dede00" strokeWidth="2" />
      <path d="M1204 656h2v2h-2z" fill="#dede00" />
    </g>
    <path d="M1256 657.500l-8-3v6z" fill="#dede00" />
    <path d="M1200.500 604l4 12 4-12M1204 608v8" stroke="#dede00" strokeWidth="1.500" />
    <g className="font-['Roboto',sans-serif]" textAnchor="middle">
      <text x="1253" y="653" fontSize="15" fill="#dede00">H</text>
      {dims.map(([t, x, y], i) => <text key={i} x={x} y={y} fontSize="14" fill="#00d800">{t}</text>)}
    </g>
    {marks.map(([m, x, y], i) =>
      m === "O" ? (
        <g key={i}><circle cx={x} cy={y - 4} r="4" stroke="#000" strokeWidth="3.500" /><circle cx={x} cy={y - 4} r="4" stroke="#00d800" strokeWidth="1.200" /></g>
      ) : (
        <g key={i} transform={`translate(${x} ${y})`}>
          <path d={markPath[m]} stroke="#000" strokeWidth="3.400" strokeLinecap="square" />
          <path d={markPath[m]} stroke="#00d800" strokeWidth="1.200" />
        </g>
      ),
    )}
  </svg>
);

const Compass = () => (
  <svg className="absolute top-6 right-3 h-20 w-[90px]" fill="none" fontSize="14" aria-hidden="true">
    <path d="M5 38q8-9 18-9q16 0 23 15q5 17-5 30H5z" fill="#174862" />
    <path d="M5 38q8-9 18-9q16 0 23 15q5 17-5 30H5z" stroke="#dccff8" strokeWidth="1.600" />
    <path d="M23 22v32M23 56h33" stroke="#dccff8" strokeWidth="2" />
    <path d="M19 51h8v9h-8z" fill="#d00000" />
    <g fill="#ffff00"><text x="30" y="16">y</text><text x="62" y="48">x</text><text x="29" y="50">z</text></g>
  </svg>
);

const Viewport = () => (
  <main className="relative min-w-0 flex-1 overflow-hidden bg-[linear-gradient(180deg,#333366_0,#3c3c6c_35%,#474775_64%,#5c5c85_74%,#77779a_81%,#9393ae_90%,#adadc0_100%)]">
    <Sketch />
    <Compass />
    <svg className="absolute right-0 bottom-4 h-12 w-12" fill="none" fontSize="14" aria-hidden="true">
      <path d="M22.500 26v17H42" stroke="#fff" />
      <text x="22" y="24" fill="#fff">y</text><text x="39" y="43" fill="#fff">x</text>
    </svg>
    <Tree />
    <span className="absolute inset-y-0 left-0 w-px bg-[#8c8c90]" />
  </main>
);

const SideToolbar = () => (
  <aside className="flex w-[38px] shrink-0 flex-col bg-[linear-gradient(90deg,#fff_0,#f4f4fb_8%,#d0d0e6_26%,#d0d0e6_72%,#a6a6bd_100%)]">
    <SideGrip className="h-4" />
    <SideTool name="compass" label="工作台" /><SideTool name="exit" label="退出工作台" />
    <SideGrip className="h-4" />
    <SideTool name="d1" label="结构树一" /><SideTool name="d2" label="结构树二" /><SideTool name="d3" label="结构树三" /><SideTool name="d4" label="结构树四" />
    <SideGrip className="h-5" />
    <SideTool name="arrow" label="选择" menu />
    <SideGrip className="h-4" />
    <SideTool name="dimCons" label="对话框约束" /><SideTool name="cons" label="约束" menu /><SideTool name="clip" label="固联" menu />
    <SideTool name="autoCon" label="自动约束" /><SideTool name="editCon" label="编辑多重约束" />
    <SideGrip className="h-[18px]" />
    <SideTool name="profile" label="轮廓" /><SideTool name="rect" label="矩形" menu /><SideTool name="circle" label="圆" menu />
    <SideTool name="curve" label="样条线" menu /><SideTool name="ellipse" label="椭圆" menu /><SideTool name="line" label="直线" menu />
    <SideTool name="axis" label="轴" /><SideTool name="point" label="点" menu />
    <SideGrip className="h-[18px]" />
    <SideTool name="corner" label="圆角" /><SideTool name="chamfer" label="倒角" /><SideTool name="trim" label="修剪" menu />
    <SideTool name="mirror" label="镜像" menu /><SideTool name="project" label="投影三维元素" menu />
  </aside>
);

/* ---------- bottom ---------- */
const BottomToolbar = () => (
  <div className={`${bar} flex h-[38px] shrink-0 items-start border-b border-[#505058] pt-1`}>
    <div className="flex h-[34px] items-start pl-1.5">
      <Grip />
      <div className="ml-1.5 flex pt-[3px]">
        <Tool name="newDoc" label="新建" /><Tool name="open" label="打开" /><Tool name="save" label="保存" /><Tool name="print" label="打印" />
        <Tool name="cut" label="剪切" /><Tool name="copy" label="复制" /><Tool name="paste" label="粘贴" />
        <Tool name="undo" label="撤销" menu /><Tool name="redo" label="重做" menu /><Tool name="whats" label="这是什么" />
      </div>
      <span className="w-2.5" /><Grip />
      <div className="ml-1.5 flex pt-[3px]">
        <Tool label="公式"><span className="font-['Liberation_Serif',serif] text-xl leading-none font-bold text-black italic">f<span className="text-[13px]">(x)</span></span></Tool>
        <Tool name="bubble" label="注解" />
        <div className="-mr-1 -ml-1 flex"><Tool name="dimKnow" label="知识工程" /></div>
        <Tool name="table" label="设计表" menu />
        <Tool name="links" label="关联" /><Tool name="lock" label="锁定" menu /><Tool name="formulas" label="等价尺寸" />
      </div>
      <span className="w-3" /><Grip />
      <div className="ml-1.5 flex pt-[3px]">
        <Tool name="fly" label="飞行模式" /><Tool name="fit" label="全部适应" /><Tool name="pan" label="平移" /><Tool name="rotate" label="旋转" />
        <Tool name="zoomIn" label="放大" /><Tool name="zoomOut" label="缩小" /><Tool name="normal" label="法线视图" /><Tool name="multi" label="多视图" />
        <Tool name="cube" label="等轴测视图" menu /><Tool name="shaded" label="着色" menu boxed /><Tool name="hide" label="隐藏显示" /><Tool name="swap" label="交换可视空间" />
      </div>
      <span className="ml-2.5 h-0.5 w-[3px] border-r border-b border-[#a0a0a4] bg-white" />
      <span className="w-[15px]" /><Grip />
      <div className="ml-1.5 flex pt-[3px]">
        <Tool name="tree1" label="更新" /><Tool name="tree2" label="列表" /><Tool name="tree3" label="工作对象草图" /><Tool name="tree4" label="工作对象实体" /><Tool name="traffic" label="扫描" menu />
      </div>
      <span className="w-2.5" /><Grip />
      <div className="ml-1.5 flex pt-[3px]"><Tool name="measure" label="测量间距" /><Tool name="caliper" label="测量项" /></div>
      <span className="w-2.5" /><Grip />
      <div className="ml-1.5 flex pt-[3px]"><Tool name="analysis" label="拔模分析" /></div>
      <span className="w-0.5" /><Rule />
      <div className="ml-1 flex pt-[3px]"><Tool name="cutPart" label="按草图平面剪切零件" menu boxed /><Tool name="cutPlane" label="剖切" menu /></div>
      <span className="w-0.5" /><Rule />
      <div className="ml-1.5 flex pt-[3px]"><Tool name="oDim1" label="诊断" /><Tool name="oDim2" label="尺寸诊断" /><Tool name="oDim3" label="几何诊断" /></div>
    </div>
    <DSMark word="CATIA" className="-mt-0.5 mr-2 ml-auto w-[39px]" />
  </div>
);

const StatusBar = () => (
  <div className="flex h-[25px] shrink-0 items-center bg-[#d0d0e6] text-xs text-[#111]">
    <p className="pb-0.5 pl-1">选择对象或命令</p>
    <input aria-label="命令行" className="ml-auto h-[22px] w-[300px] border-2 border-t-[#707074] border-r-white border-b-white border-l-[#707074] bg-white px-1 outline-none" />
    {[
      ["对话框", "M3 3h6v6H3zM12 9h2v1M14 3v9H4"],
      ["信息", "M8 2a4 4 0 1 0 .1 0M8 5v4M14 3v9H3"],
    ].map(([l, d]) => (
      <button key={l} type="button" aria-label={l} className="flex h-[22px] w-[34px] items-center justify-center border border-t-white border-r-[#9a9aa0] border-b-[#9a9aa0] border-l-white">
        <svg viewBox="0 0 16 14" className="h-3.5 w-4" fill="none"><path d={d} stroke="#fff" strokeWidth="1.500" transform="translate(1 1)" /><path d={d} stroke="#9a9aa0" strokeWidth="1.500" /></svg>
      </button>
    ))}
  </div>
);

const taskApps: [string, boolean, React.ReactNode][] = [
  ["WPS", false, <svg viewBox="0 0 32 32" className="size-8"><rect width="32" height="32" rx="5" fill="#3ba0f8" /><path d="M8 10v12l8-6 8 6V10" stroke="#fff" strokeWidth="2.200" fill="none" /></svg>],
  ["文件资源管理器", false, <svg viewBox="0 0 32 32" className="size-8"><path d="M1 4h10l2 3h17v21H1z" fill="#f0d688" stroke="#b89a48" /><path d="M5 2h3v3H5z" fill="#2aa040" /><path d="M14 5h4v3h-4z" fill="#d04030" /><path d="M22 6h5v3h-5z" fill="#3a80d8" /><path d="M1 10h29v18H1z" fill="#f8e8a8" stroke="#c8aa58" /><path d="M5 30V20q1-2 3-2h14q3 0 4 3v9h-5v-6H10v6z" fill="#8ccbe8" stroke="#5598bc" /></svg>],
  ["词典", false, <svg viewBox="0 0 32 32" className="size-8"><path d="M.5.500h31v31H.5z" fill="#ccc8ff" stroke="#2f6ad8" strokeWidth="1.500" /><path d="M11 6l5-4 3 12-5 3z" fill="#e02020" stroke="#400" /><path d="M17 3h4v12h-4z" fill="#d02040" stroke="#400" /><path d="M22 4l6-1 1 20-5 2z" fill="#c020b0" stroke="#404" /><path d="M25 4l1 20" stroke="#f090e0" /><path d="M2 14l4-1 6 11 10-9 6 8-10 6-8-1z" fill="#fff" stroke="#222" /><path d="M14 23l7-6M16 25l8-6M5 15l7 11" stroke="#555" /><path d="M9 28l10 2 9-6" stroke="#18a030" strokeWidth="1.500" fill="none" /></svg>],
  ["CATIA V5", true, <span className="border-2 border-white"><Comet className="size-7" /></span>],
  ["微信", false, <svg viewBox="0 0 32 28" className="h-7 w-8"><ellipse cx="12" cy="10" rx="12" ry="10" fill="#6cc33c" /><path d="M4 16l0 6 6-4z" fill="#6cc33c" /><circle cx="8" cy="7" r="1.600" fill="#2f6a18" /><circle cx="16" cy="7" r="1.600" fill="#2f6a18" /><ellipse cx="22" cy="17" rx="10" ry="8" fill="#eee" /><path d="M24 23l5 4v-6z" fill="#eee" /><circle cx="19" cy="15" r="1.300" fill="#777" /><circle cx="26" cy="15" r="1.300" fill="#777" /></svg>],
];

const tray: [string, React.ReactNode][] = [
  ["显示器", <><path d="M1 2h16v11H1z" fill="#8a8a8a" stroke="#101070" /><path d="M1 15.500h6M11 15.500h6" stroke="#101070" strokeWidth="2" /></>],
  ["截图", <><path d="M1 1h16v16H1z" fill="#1f6fe8" /><path d="M8 6h7v8H4v-4" fill="none" stroke="#fff" strokeWidth="1.500" /><circle cx="6" cy="6" r="2.500" fill="none" stroke="#fff" /></>],
  ["网易云音乐", <><rect x="1" y="1" width="16" height="16" rx="2" fill="#e8220e" /><path d="M12 4q-3-1-3 1l1 5q-1 2-3 1t1-4q4-2 6 1t-3 6q-6 1-6-4q0-3 3-5" fill="none" stroke="#fff" strokeWidth="1.200" /></>],
  ["QQ", <><ellipse cx="9" cy="9" rx="6" ry="8" fill="#111" /><ellipse cx="9" cy="12" rx="4" ry="4" fill="#fff" /><path d="M3 8q6 4 12 0l1 3q-7 3-14 0z" fill="#e0201c" /><circle cx="7" cy="5" r="1.400" fill="#fff" /><circle cx="11" cy="5" r="1.400" fill="#fff" /><path d="M3 15h5v2H3zM10 15h5v2h-5z" fill="#f8b018" /></>],
  ["微信", <><ellipse cx="7" cy="7" rx="6.500" ry="5.500" fill="#6cc33c" /><ellipse cx="12" cy="12" rx="5.500" ry="4.500" fill="#eee" /><path d="M5 6h1M9 6h1M10 11h1M13 11h1" stroke="#333" /></>],
  ["信号", <><path d="M1 1h16v16H1z" fill="#f8f8f4" /><path d="M4 11h3v4H4zM8 8h3v7H8zM12 4h3v11h-3z" fill="#28a838" /></>],
  ["音频管理", <><path d="M1 7h3l6-5v14l-6-5H1z" fill="#c85838" stroke="#5a2818" /><path d="M13 6q2 3 0 6M15.500 4q3 5 0 10" stroke="#8a4030" fill="none" /></>],
  ["杜比", <><path d="M1 2h16v14H1z" fill="#080808" /><path d="M3.500 5.500h11v7h-11z" fill="none" stroke="#fff" strokeWidth="1.300" /><path d="M5 6q3 3 0 6zM13 6q-3 3 0 6z" fill="#fff" /></>],
  ["图形", <><path d="M1 1h16v16H1z" fill="#1c86c8" /><path d="M5 4h8v6H5zM4 14l2-4M9 11h6v4H9z" fill="none" stroke="#dff4ff" strokeWidth="1.200" /><path d="M1 13l5 4H1z" fill="#f0b030" /></>],
  ["电源", <><path d="M3 4h6v12H3zM5 4V2h3" fill="none" stroke="#fff" strokeWidth="1.400" /><path d="M11 2v4M15 2v4" stroke="#fff" strokeWidth="1.500" /><path d="M9 6h8v3q-1 3-3 3v4h-2v-4q-3-1-3-3z" fill="#fff" /></>],
  ["网络", <path d="M1 13h2v3H1zM4 11h2v5H4zM7 9h2v7H7zM10 7h2v9h-2zM13 4h3v12h-3z" fill="#fff" stroke="#444" strokeWidth=".4" />],
  ["音量", <><path d="M3 7h2l4-4v12l-4-4H3z" fill="#e8e0e8" stroke="#fff" strokeWidth="1.200" /><path d="M12 7q1 2 0 4M14.500 5q2 4 0 8" stroke="#fff" fill="none" /></>],
];

const Taskbar = () => (
  <footer className="flex h-[39px] shrink-0 items-start border-t border-[#4c424c] bg-[linear-gradient(90deg,#3b3038_0,#4a3e48_180px,#6c5c69_520px,#c4aec2_665px,#d4bdd0_900px,#c4aec0_1200px,#d2bacd_1260px,#cbb2c8_1425px,#98868f_1450px,#a28f9e_1600px,#8e7c8b_100%)] shadow-[inset_0_1px_#d8c8d8]">
    <button type="button" aria-label="开始" className="ml-[7px] flex w-10 justify-center">
      <svg viewBox="0 0 40 38" className="h-[38px] w-10">
        <defs>
          <radialGradient id="orb" cx=".5" cy=".85" r=".9"><stop offset="0" stopColor="#35c8ee" /><stop offset=".45" stopColor="#1a5c96" /><stop offset="1" stopColor="#a9c4d6" /></radialGradient>
        </defs>
        <circle cx="20" cy="19" r="18" fill="url(#orb)" stroke="#5e7c90" />
        <path d="M12 10q4-3 8-1l-2 8q-4-2-8 1z" fill="#e85a28" /><path d="M22 10q4 2 9 0l-3 8q-4 2-8 0z" fill="#7cbc30" />
        <path d="M9 20q4-3 8-1l-2 8q-4-2-8 0z" fill="#3a9ce0" /><path d="M19 20q4 2 9 0l-3 8q-4 2-8 0z" fill="#fcc820" />
      </svg>
    </button>
    <button type="button" aria-label="Internet Explorer" className="ml-[26px] flex h-9 w-8 items-center justify-center">
      <svg viewBox="0 0 32 32" className="size-8" fill="none"><path d="M26 21q-3 7-10 6q-8-1-8-10q1-8 8-9q9 0 9 10H9" stroke="#48b4ec" strokeWidth="5" /><path d="M3 29q-4-5 6-15Q22 1 28 3q3 2 0 8" stroke="#f4c02c" strokeWidth="2.600" /></svg>
    </button>
    <button type="button" aria-label="QQ浏览器" className="ml-[30px] flex h-9 w-8 items-center justify-center">
      <svg viewBox="0 0 32 32" className="size-8"><circle cx="16" cy="16" r="11.500" stroke="#2a92f0" strokeWidth="7" fill="none" /><path d="M12 31q-2-7 4-7q3-7 9-3q7 2 6 7l-2 3z" fill="#fff" /></svg>
    </button>
    <div className="ml-[17px] flex gap-1">
      {taskApps.map(([l, on, icon]) => (
        <button key={l} type="button" aria-label={l} className={`flex h-[38px] w-[58px] items-center justify-center rounded-[3px] border border-[#cfc3cd]/80 pb-0.5 shadow-[0_0_0_1px_#3a3038] ${on ? "bg-linear-to-br from-[#efe9ee] to-[#a79aa6]" : "bg-linear-to-br from-[#8f8590] to-[#5b4f5a]"}`}>
          {icon}
        </button>
      ))}
    </div>
    <div className="ml-auto flex h-[38px] items-center">
      <div className="flex items-center pb-1">
        <svg viewBox="0 0 16 14" className="h-3.5 w-4" role="img" aria-label="键盘"><path d="M1 5h14v8H1z" fill="#ddd" stroke="#555" /><path d="M3 8h10M3 10.500h10M6 4q3-1 7-3" stroke="#555" strokeDasharray="1.500 1" fill="none" /></svg>
        <svg viewBox="0 0 18 18" className="ml-1.5 size-4" role="img" aria-label="帮助"><circle cx="9" cy="9" r="8" fill="#0a28b8" stroke="#c8d4f0" /><path d="M6.500 7q0-3 3-2.700t2.300 3q-2 1.500-2.500 3.200M9 12.500v2" stroke="#fff" strokeWidth="1.900" fill="none" /></svg>
        <svg viewBox="0 0 10 18" className="ml-2.5 h-[18px] w-2.5" aria-hidden="true"><path d="M4 1h5v3H4zM1.500 4h5v2h-5z" fill="none" stroke="#fff" /><path d="M2 14h6l-3 3z" fill="#fff" /></svg>
      </div>
      <div className="ml-3.5 flex gap-1.5 pt-px">
        {tray.map(([l, icon]) => (
          <button key={l} type="button" aria-label={l}><svg viewBox="0 0 18 18" className="size-[18px]">{icon}</svg></button>
        ))}
      </div>
      <time className="ml-2 w-[74px] text-center text-xs leading-[18px] whitespace-nowrap text-white">22:06<br />2018/5/11</time>
      <button type="button" aria-label="显示桌面" className="mr-0.5 h-[38px] w-3.5 border border-[#c8b8c6] bg-linear-to-b from-[#8a7a88] to-[#b8a6b4]" />
    </div>
  </footer>
);

export default function App() {
  return (
    <div className="flex h-screen w-full flex-col overflow-hidden bg-[#d0d0e6] font-['Noto_Sans','Noto_Sans_CJK_SC',sans-serif]">
      <TitleBar />
      <MenuBar />
      <TopToolbar />
      <div className="flex min-h-0 flex-1">
        <Viewport />
        <SideToolbar />
      </div>
      <BottomToolbar />
      <StatusBar />
      <Taskbar />
    </div>
  );
}
